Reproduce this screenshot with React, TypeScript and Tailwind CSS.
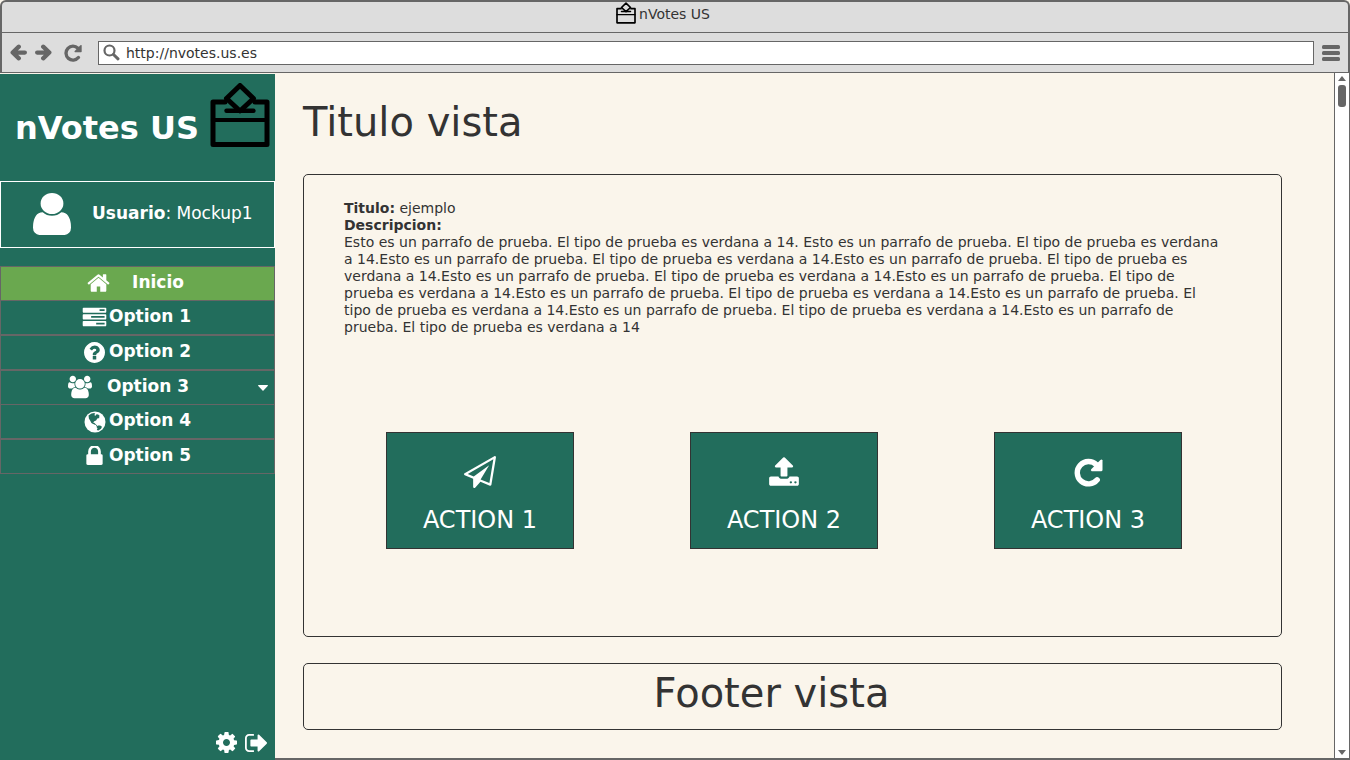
import React from "react";

const PATHS = {
  user: "M1536 1399q0 109-62.5 187t-150.5 78h-854q-88 0-150.5-78t-62.5-187q0-85 8.5-160.5t31.5-152 58.5-131 94-89 134.5-34.5q131 128 313 128t313-128q76 0 134.5 34.5t94 89 58.5 131 31.5 152 8.5 160.5zm-256-887q0 159-112.5 271.5t-271.5 112.5-271.5-112.5-112.5-271.5 112.5-271.5 271.5-112.5 271.5 112.5 112.5 271.5z",
  home: "M1472 992v480q0 26-19 45t-45 19h-384v-384h-256v384h-384q-26 0-45-19t-19-45v-480q0-1 .5-3t.5-3l575-474 575 474q1 2 1 6zm223-69l-62 74q-8 9-21 11h-3q-13 0-21-7l-692-577-692 577q-12 8-24 7-13-2-21-11l-62-74q-8-10-7-23.5t11-21.5l719-599q32-26 76-26t76 26l244 204v-195q0-14 9-23t23-9h192q14 0 23 9t9 23v408l219 182q10 8 11 21.5t-7 23.5z",
  tasks: "M1024 1408h640v-128h-640v128zm-384-512h1024v-128h-1024v128zm640-512h384v-128h-384v128zm512 832v256q0 26-19 45t-45 19h-1664q-26 0-45-19t-19-45v-256q0-26 19-45t45-19h1664q26 0 45 19t19 45zm0-512v256q0 26-19 45t-45 19h-1664q-26 0-45-19t-19-45v-256q0-26 19-45t45-19h1664q26 0 45 19t19 45zm0-512v256q0 26-19 45t-45 19h-1664q-26 0-45-19t-19-45v-256q0-26 19-45t45-19h1664q26 0 45 19t19 45z",
  question: "M1024 1376v-192q0-14-9-23t-23-9h-192q-14 0-23 9t-9 23v192q0 14 9 23t23 9h192q14 0 23-9t9-23zm256-672q0-88-55.5-163t-138.5-116-170-41q-243 0-371 213-15 24 8 42l132 100q7 6 19 6 16 0 25-12 53-68 86-92 34-24 86-24 48 0 85.5 26t37.5 59q0 38-20 61t-68 45q-63 28-115.5 86.5t-52.5 125.5v36q0 14 9 23t23 9h192q14 0 23-9t9-23q0-19 21.5-49.5t54.5-49.5q32-18 49-28.5t46-35 44.5-48 28-60.5 12.5-81zm384 192q0 209-103 385.5t-279.5 279.5-385.5 103-385.5-103-279.5-279.5-103-385.5 103-385.5 279.5-279.5 385.5-103 385.5 103 279.5 279.5 103 385.5z",
  users: "M529 896q-162 5-265 128h-134q-82 0-138-40.5t-56-118.5q0-353 124-353 6 0 43.5 21t97.5 42.5 119 21.5q67 0 133-23-5 37-5 66 0 139 81 256zm1071 637q0 120-73 189.5t-194 69.5h-874q-121 0-194-69.5t-73-189.5q0-53 3.5-103.5t14-109 26.5-108.5 43-97.5 62-81 85.5-53.5 111.5-20q10 0 43 21.5t73 48 107 48 135 21.5 135-21.5 107-48 73-48 43-21.5q61 0 111.5 20t85.5 53.5 62 81 43 97.5 26.5 108.5 14 109 3.5 103.5zm-1024-1277q0 106-75 181t-181 75-181-75-75-181 75-181 181-75 181 75 75 181zm704 384q0 159-112.5 271.5t-271.5 112.5-271.5-112.5-112.5-271.5 112.5-271.5 271.5-112.5 271.5 112.5 112.5 271.5zm576 225q0 78-56 118.5t-138 40.5h-134q-103-123-265-128 81-117 81-256 0-29-5-66 66 23 133 23 59 0 119-21.5t97.5-42.5 43.5-21q124 0 124 353zm-128-609q0 106-75 181t-181 75-181-75-75-181 75-181 181-75 181 75 75 181z",
  lock: "M640 768h512v-192q0-106-75-181t-181-75-181 75-75 181v192zm832 96v576q0 40-28 68t-68 28h-960q-40 0-68-28t-28-68v-576q0-40 28-68t68-28h32v-192q0-184 132-316t316-132 316 132 132 316v192h32q40 0 68 28t28 68z",
  cog: "M1152 896q0-106-75-181t-181-75-181 75-75 181 75 181 181 75 181-75 75-181zm512-109v222q0 12-8 23t-20 13l-185 28q-19 54-39 91 35 50 107 138 10 12 10 25t-9 23q-27 37-99 108t-94 71q-12 0-26-9l-138-108q-44 23-91 38-16 136-29 186-7 28-36 28h-222q-14 0-24.5-8.5t-11.5-21.5l-28-184q-49-16-90-37l-141 107q-10 9-25 9-14 0-25-11-126-114-165-168-7-10-7-23 0-12 8-23 15-21 51-66.5t54-70.5q-27-50-41-99l-183-27q-13-2-21-12.5t-8-23.5v-222q0-12 8-23t19-13l186-28q14-46 39-92-40-57-107-138-10-12-10-24 0-10 9-23 26-36 98.5-107.5t94.5-71.5q13 0 26 10l138 107q44-23 91-38 16-136 29-186 7-28 36-28h222q14 0 24.5 8.5t11.5 21.5l28 184q49 16 90 37l142-107q9-9 24-9 13 0 25 10 129 119 165 170 7 8 7 22 0 12-8 23-15 21-51 66.5t-54 70.5q26 50 41 98l183 28q13 2 21 12.5t8 23.5z",
  signOut: "M704 1440q0 4 1 20t.5 26.5-3 23.5-10 19.5-20.5 6.5h-320q-119 0-203.5-84.5t-84.5-203.5v-704q0-119 84.5-203.5t203.5-84.5h320q13 0 22.5 9.5t9.5 22.5q0 4 1 20t.5 26.5-3 23.5-10 19.5-20.5 6.5h-320q-66 0-113 47t-47 113v704q0 66 47 113t113 47h312l11.5 1 11.5 3 8 5.5 7 9 2 13.5zm928-544q0 26-19 45l-544 544q-19 19-45 19t-45-19-19-45v-288h-448q-26 0-45-19t-19-45v-384q0-26 19-45t45-19h448v-288q0-26 19-45t45-19 45 19l544 544q19 19 19 45z",
  plane: "M1764 11q33 24 27 64l-256 1536q-5 29-32 45-14 8-31 8-11 0-24-5l-527-215-298 327q-18 21-47 21-14 0-23-4-19-7-30-23.5t-11-36.5v-452l-472-193q-37-14-40-55-3-39 32-59l1664-960q35-21 68 2zm-342 1499l221-1323-1434 827 336 137 863-639-478 797z",
  upload: "M1344 1472q0-26-19-45t-45-19-45 19-19 45 19 45 45 19 45-19 19-45zm256 0q0-26-19-45t-45-19-45 19-19 45 19 45 45 19 45-19 19-45zm128-224v320q0 40-28 68t-68 28h-1472q-40 0-68-28t-28-68v-320q0-40 28-68t68-28h427q21 56 70.5 92t110.5 36h256q61 0 110.5-36t70.5-92h427q40 0 68 28t28 68zm-325-648q-17 40-59 40h-256v448q0 26-19 45t-45 19h-256q-26 0-45-19t-19-45v-448h-256q-42 0-59-40-17-39 14-69l448-448q18-19 45-19t45 19l448 448q31 30 14 69z",
};

type IconProps = { className?: string };

function Glyph({ d, className, box = "0 0 1792 1792" }: IconProps & { d: string; box?: string }) {
  return (
    <svg viewBox={box} fill="currentColor" className={className} aria-hidden="true">
      <path d={d} />
    </svg>
  );
}

function BallotBox({ className }: IconProps) {
  return (
    <svg viewBox="0 0 60 64" fill="none" stroke="#000" strokeWidth="5" strokeLinecap="round" strokeLinejoin="round" className={className} aria-hidden="true">
      <path d="M15 19H3v42.5h54V19H45" />
      <path d="M30 2.5l13.5 13L30 28 16.500 15.500z" />
      <path d="M16.500 27.800h27" strokeWidth="4.400" />
      <path d="M3 37h54" strokeWidth="4.200" />
    </svg>
  );
}

function Globe({ className }: IconProps) {
  return (
    <svg viewBox="0 0 22 22" className={className} aria-hidden="true">
      <circle cx="11" cy="11" r="10.500" fill="#fff" />
      <path
        fill="#226d5c"
        d="M4.500 4.400L7.500 2.600l2.800-.6 1 .9-1.200 1.200 1.500.6.900-1.500 1.700.2 1.600 1.500-1 1 .8 1.200-2.300.5-1.200 1.800-1.800.8-1.200 1.400 1.500.5.200 1.300-1.700-.4-1.700-1-1-2.100-1.500-2.400-.3-2.400zM12.300 15.800l1.700-1.200 2.200-.2 1.800 1.400-1 2-2.600 1.600-1.600-.3.700-1.800z"
      />
      <path d="M9.500 12.500l2 .8 1.300 1.500" fill="none" stroke="#226d5c" strokeWidth="1" />
    </svg>
  );
}

function Reload({ className }: IconProps) {
  return (
    <svg viewBox="0 0 30 30" className={className} aria-hidden="true">
      <path d="M24 22.500A11.600 11.600 0 1 1 23.200 7" fill="none" stroke="currentColor" strokeWidth="5.600" strokeLinecap="round" />
      <path d="M29.500 2.500v9.900q0 1.200-1.200 1.200h-10q-1.500-.6-.5-1.900l9.500-9.700q1.600-1.200 2.200.5z" fill="currentColor" />
    </svg>
  );
}

function Arrow({ className }: IconProps) {
  return (
    <svg viewBox="0 0 16 16" fill="none" stroke="currentColor" strokeWidth="4" strokeLinecap="round" strokeLinejoin="round" className={className} aria-hidden="true">
      <path d="M3.500 8H14M8.300 2.500L2.500 8l5.800 5.500" />
    </svg>
  );
}

const NAV = [
  { label: "Option 1", icon: <Glyph d={PATHS.tasks} box="0 80 1792 1520" className="h-5 w-[25px]" />, row: "-mt-px gap-0.5 pr-0.5" },
  { label: "Option 2", icon: <Glyph d={PATHS.question} box="128 128 1536 1536" className="mt-0.5 h-[21px] w-[21px]" />, row: "gap-1" },
  { label: "Option 3", icon: <Glyph d={PATHS.users} box="-64 0 1920 1792" className="h-6 w-6" />, row: "gap-[15px] pr-[18px]", menu: true },
  { label: "Option 4", icon: <Globe className="mt-0.5 h-[22px] w-[22px]" />, row: "-mt-px gap-[3px]" },
  { label: "Option 5", icon: <Glyph d={PATHS.lock} box="320 192 1152 1344" className="mx-0.5 h-[19px] w-[17px]" />, row: "gap-1" },
];

const ACTIONS = [
  { label: "ACTION 1", icon: <Glyph d={PATHS.plane} className="h-8 w-8" /> },
  { label: "ACTION 2", icon: <Glyph d={PATHS.upload} box="64 0 1664 1792" className="h-8 w-[30px]" /> },
  { label: "ACTION 3", icon: <Reload className="h-[29px] w-[29px]" /> },
];

const LINES = [
  "Esto es un parrafo de prueba. El tipo de prueba es verdana a 14. Esto es un parrafo de prueba. El tipo de prueba es verdana",
  "a 14.Esto es un parrafo de prueba. El tipo de prueba es verdana a 14.Esto es un parrafo de prueba. El tipo de prueba es",
  "verdana a 14.Esto es un parrafo de prueba. El tipo de prueba es verdana a 14.Esto es un parrafo de prueba. El tipo de",
  "prueba es verdana a 14.Esto es un parrafo de prueba. El tipo de prueba es verdana a 14.Esto es un parrafo de prueba. El",
  "tipo de prueba es verdana a 14.Esto es un parrafo de prueba. El tipo de prueba es verdana a 14.Esto es un parrafo de",
  "prueba. El tipo de prueba es verdana a 14",
];

function BrowserBar() {
  return (
    <header className="rounded-t-md border-2 border-b-0 border-[#666] bg-[#ddd] text-sm">
      <div className="flex h-[31px] items-start justify-center gap-[3px] border-b border-[#666] pr-6">
        <BallotBox className="h-[22px] w-5" />
        <span className="leading-6">nVotes US</span>
      </div>
      <div className="flex h-10 items-center border-b border-[#666] px-2 text-[#666]">
        <button type="button" aria-label="Back" className="mr-2">
          <Arrow className="h-[17px] w-[17px]" />
        </button>
        <button type="button" aria-label="Forward" className="mr-3">
          <Arrow className="h-[17px] w-[17px] rotate-180" />
        </button>
        <button type="button" aria-label="Reload" className="mr-4">
          <Reload className="h-[18px] w-[18px]" />
        </button>
        <label className="flex h-6 flex-1 items-center gap-1.5 border border-[#666] bg-white pl-1">
          <svg viewBox="0 0 17 17" fill="none" stroke="currentColor" className="h-[17px] w-[17px]" aria-hidden="true">
            <circle cx="6.500" cy="6.500" r="5" strokeWidth="2.200" />
            <path d="M10.500 10.500l4.500 4.300" strokeWidth="3" strokeLinecap="round" />
          </svg>
          <input type="text" aria-label="Address" defaultValue="http://nvotes.us.es" className="min-w-0 flex-1 bg-transparent text-sm text-[#333] outline-none" />
        </label>
        <button type="button" aria-label="Menu" className="ml-2">
          <svg viewBox="0 0 18 16" fill="currentColor" className="h-4 w-[18px]" aria-hidden="true">
            <rect y="0" width="18" height="4" rx="1.500" />
            <rect y="6" width="18" height="4" rx="1.500" />
            <rect y="12" width="18" height="4" rx="1.500" />
          </svg>
        </button>
      </div>
    </header>
  );
}

function Sidebar() {
  return (
    <aside className="mt-px flex w-[275px] shrink-0 flex-col bg-[#226d5c] text-white">
      <div className="flex h-[107px] items-start justify-between pt-[9px] pr-[5px] pl-[15px]">
        <span className="pt-[21px] text-[32px] leading-[48px] font-bold whitespace-nowrap">nVotes US</span>
        <BallotBox className="h-16 w-[60px] shrink-0" />
      </div>
      <div className="flex h-[67px] items-center border border-white pb-0.5 pl-8">
        <svg viewBox="256 128 1280 1536" preserveAspectRatio="none" fill="currentColor" className="h-[42px] w-[38px]" aria-hidden="true">
          <path d={PATHS.user} />
        </svg>
        <p className="ml-[21px] text-[17px] whitespace-nowrap">
          <b>Usuario</b>: Mockup1
        </p>
      </div>
      <nav className="mt-[18px] flex flex-col text-[17px] font-bold">
        <a href="#inicio" className="flex h-[35px] items-center justify-center gap-[22px] border border-[#666] bg-[#6aa84f] pr-1 pb-0.5">
          <Glyph d={PATHS.home} box="60 230 1670 1330" className="h-[18px] w-[23px]" />
          Inicio
        </a>
        {NAV.map((item) => (
          <a key={item.label} href="#option" className={`relative flex h-[35px] items-center justify-center border border-[#666] pb-0.5 ${item.row}`}>
            {item.icon}
            {item.label}
            {item.menu && (
              <svg viewBox="0 0 10 6" fill="currentColor" className="absolute top-3.5 right-1.5 h-1.5 w-2.5" aria-hidden="true">
                <path d="M.500 0h9q.700.300.200 1L5.500 5.500q-.500.500-1 0L.300 1Q-.200.300.500 0z" />
              </svg>
            )}
          </a>
        ))}
      </nav>
      <div className="mt-auto flex items-center justify-end gap-2 pr-2 pb-[7px]">
        <button type="button" aria-label="Settings">
          <Glyph d={PATHS.cog} box="128 128 1536 1536" className="h-[21px] w-[21px]" />
        </button>
        <button type="button" aria-label="Sign out">
          <Glyph d={PATHS.signOut} box="64 256 1568 1280" className="h-[18px] w-[22px]" />
        </button>
      </div>
    </aside>
  );
}

function Scrollbar() {
  return (
    <div className="flex w-4 shrink-0 flex-col items-center border-x border-[#666] bg-white py-[3px] text-[#666]">
      <svg viewBox="0 0 8 5" fill="currentColor" className="h-[5px] w-2" aria-hidden="true">
        <path d="M0 5l4-5 4 5z" />
      </svg>
      <div className="mt-1 h-[22px] w-2 rounded-[3px] bg-[#666]" />
      <svg viewBox="0 0 8 5" fill="currentColor" className="mt-auto h-[5px] w-2" aria-hidden="true">
        <path d="M0 0l4 5 4-5z" />
      </svg>
    </div>
  );
}

export default function App() {
  return (
    <div className="flex min-h-screen flex-col bg-[#faf5eb] font-['DejaVu_Sans',Verdana,sans-serif] text-[#333]">
      <BrowserBar />
      <div className="flex flex-1">
        <Sidebar />
        <div className="flex min-w-0 flex-1 border-b-2 border-[#666]">
          <main className="flex min-w-0 flex-1 flex-col pt-[25px] pr-[52px] pb-7 pl-7">
            <h1 className="text-[40px] leading-[48px]">Titulo vista</h1>
            <section className="mt-7 flex flex-1 flex-col rounded-[5px] border border-[#333] pt-[25px]">
              <div className="pl-10 text-sm leading-[17px]">
                <p>
                  <b>Titulo:</b> ejemplo
                </p>
                <p className="font-bold">Descripcion:</p>
                <p className="whitespace-nowrap">
                  {LINES.map((line) => (
                    <span key={line} className="block">
                      {line}
                    </span>
                  ))}
                </p>
              </div>
              <div className="mt-24 flex justify-between pr-[99px] pl-[82px]">
                {ACTIONS.map((action) => (
                  <button key={action.label} type="button" className="flex h-[117px] w-[188px] flex-col items-center border border-[#333] bg-[#226d5c] pt-[23px] text-white">
                    <span className="flex h-8 items-center">{action.icon}</span>
                    <span className="mt-4 text-2xl">{action.label}</span>
                  </button>
                ))}
              </div>
            </section>
            <footer className="mt-[26px] rounded-[5px] border border-[#333] pt-0.5 pb-2 pr-[42px] text-center text-[40px] leading-[55px]">
              Footer vista
            </footer>
          </main>
          <Scrollbar />
        </div>
      </div>
    </div>
  );
}
